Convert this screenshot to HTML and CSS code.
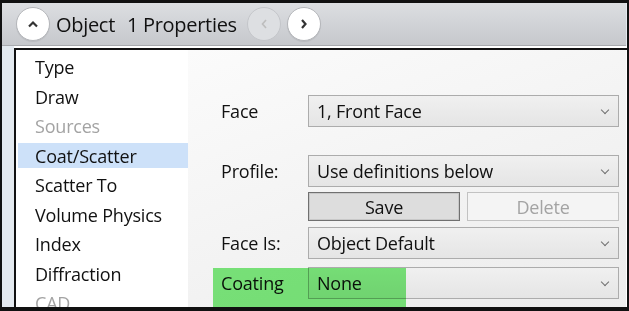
FILE: index.html
```html
<!DOCTYPE html>
<html lang="en">
<head>
  <meta charset="UTF-8" />
  <title>Object Properties</title>
  <link rel="stylesheet" href="styles.css">
</head>
<body>
  <div class="window">
    <div class="header">
      <button class="round-btn">
        <svg width="12" height="8" viewBox="0 0 12 8"><path d="M2 6.5 L6 2.5 L10 6.5" fill="none" stroke="#333" stroke-width="2.2"/></svg>
      </button>
      <span class="title">Object</span>
      <span class="title title-count">1 Properties</span>
      <div class="nav">
        <button class="round-btn disabled">
          <svg width="8" height="12" viewBox="0 0 8 12"><path d="M6 2 L2.5 6 L6 10" fill="none" stroke="#bdbdbd" stroke-width="1.6"/></svg>
        </button>
        <button class="round-btn">
          <svg width="8" height="12" viewBox="0 0 8 12"><path d="M2 2 L5.5 6 L2 10" fill="none" stroke="#333" stroke-width="2.2"/></svg>
        </button>
      </div>
    </div>
    <div class="sep"></div>

    <div class="content">
      <ul class="pages">
        <li>Type</li>
        <li>Draw</li>
        <li class="off">Sources</li>
        <li class="active">Coat/Scatter</li>
        <li>Scatter To</li>
        <li>Volume Physics</li>
        <li>Index</li>
        <li>Diffraction</li>
        <li class="off">CAD</li>
      </ul>

      <div class="panel">
        <div class="row row-face">
          <span class="label">Face</span>
          <div class="dropdown">1, Front Face<span class="caret"></span></div>
        </div>
        <div class="row row-profile">
          <span class="label">Profile:</span>
          <div class="dropdown">Use definitions below<span class="caret"></span></div>
        </div>
        <div class="row row-buttons">
          <span class="label"></span>
          <div class="btn-pair">
            <button class="btn">Save</button>
            <button class="btn btn-off">Delete</button>
          </div>
        </div>
        <div class="row row-faceis">
          <span class="label">Face Is:</span>
          <div class="dropdown">Object Default<span class="caret"></span></div>
        </div>
        <div class="row row-coating">
          <span class="label">Coating</span>
          <div class="dropdown">None<span class="caret"></span></div>
          <div class="mark"></div>
        </div>
      </div>
    </div>
  </div>
</body>
</html>
```

FILE: styles.css
```css
body {
  margin: 0;
  font-family: 'Open Sans', 'Noto Sans', sans-serif;
  background: #fff;
}

.window {
  width: 629px;
  height: 311px;
  box-sizing: border-box;
  border: solid #111;
  border-width: 3px 2px 4px 2px;
  background: #e3e9ef;
  display: flex;
  flex-direction: column;
  overflow: hidden;
}

/* title bar */
.header {
  height: 42px;
  margin-right: 1px;
  background: linear-gradient(#dcdee1, #c6c8cc);
  border-bottom: 1px solid #a8aaae;
  display: flex;
  align-items: center;
  padding-left: 14px;
}

.round-btn {
  width: 34px;
  height: 34px;
  border-radius: 50%;
  border: 1px solid #b4b6ba;
  background: #fff;
  padding: 0;
  display: flex;
  align-items: center;
  justify-content: center;
  box-shadow: 0 1px 1px rgba(0,0,0,0.08);
}

.round-btn.disabled {
  background: #dddfe2;
  border-color: #c4c6ca;
  box-shadow: none;
}

.title {
  font-size: 20px;
  color: #111;
  margin-left: 6px;
  letter-spacing: -0.3px;
}

.title-count {
  margin-left: 12px;
}

.nav {
  display: flex;
  gap: 6px;
  margin-left: 10px;
}

.sep {
  height: 2px;
  background: #fff;
  margin-left: 12px;
}

/* body */
.content {
  flex: 1;
  display: flex;
  margin-left: 12px;
  border-top: 2px solid #111;
  border-left: 2px solid #111;
  background: #fff;
  min-height: 0;
}

.pages {
  list-style: none;
  margin: 0;
  padding: 4px 0 0 2px;
  width: 170px;
  display: flex;
  flex-direction: column;
  gap: 4.5px;
  background: #fff;
}

.pages li {
  height: 25px;
  line-height: 26px;
  padding-left: 17px;
  font-size: 18px;
  letter-spacing: -0.2px;
  color: #111;
  white-space: nowrap;
}

.pages li.off {
  color: #a3a3a3;
}

.pages li.active {
  background: #cde1f9;
}

.panel {
  flex: 1;
  background: linear-gradient(160deg, #fbfbfb, #ececec);
  padding: 45px 7px 0 33px;
  display: flex;
  flex-direction: column;
  margin-right: 1px;
}

.row {
  display: flex;
  align-items: center;
  position: relative;
}

.label {
  width: 87px;
  flex-shrink: 0;
  font-size: 18px;
  letter-spacing: -0.2px;
  color: #111;
}

.row-profile { margin-top: 28px; }
.row-buttons { margin-top: 5px; }
.row-faceis { margin-top: 6px; }
.row-coating { margin-top: 8px; }

.dropdown {
  flex: 1;
  height: 32px;
  box-sizing: border-box;
  border: 1px solid #acacac;
  background: linear-gradient(#f0f0f0, #e5e5e5);
  font-size: 18px;
  letter-spacing: -0.2px;
  color: #111;
  padding-left: 8px;
  line-height: 30px;
  position: relative;
}

.caret {
  position: absolute;
  right: 10px;
  top: 11px;
  width: 5px;
  height: 5px;
  border-right: 1.5px solid #707070;
  border-bottom: 1.5px solid #707070;
  transform: rotate(45deg);
}

.btn-pair {
  flex: 1;
  display: flex;
  gap: 7px;
}

.btn {
  flex: 1;
  height: 29px;
  font-family: inherit;
  font-size: 18px;
  letter-spacing: -0.2px;
  color: #111;
  background: #dddddd;
  border: 1px solid #707070;
  box-shadow: inset 0 0 0 1px #c8c8c8;
  padding: 0;
}

.btn-off {
  color: #a3a3a3;
  background: #f4f4f4;
  border-color: #c2c2c2;
  box-shadow: none;
}

/* green highlight drawn over the coating row */
.mark {
  position: absolute;
  left: -8px;
  top: 1px;
  width: 193px;
  height: 44px;
  background: #7deb7d;
  mix-blend-mode: multiply;
}
```
